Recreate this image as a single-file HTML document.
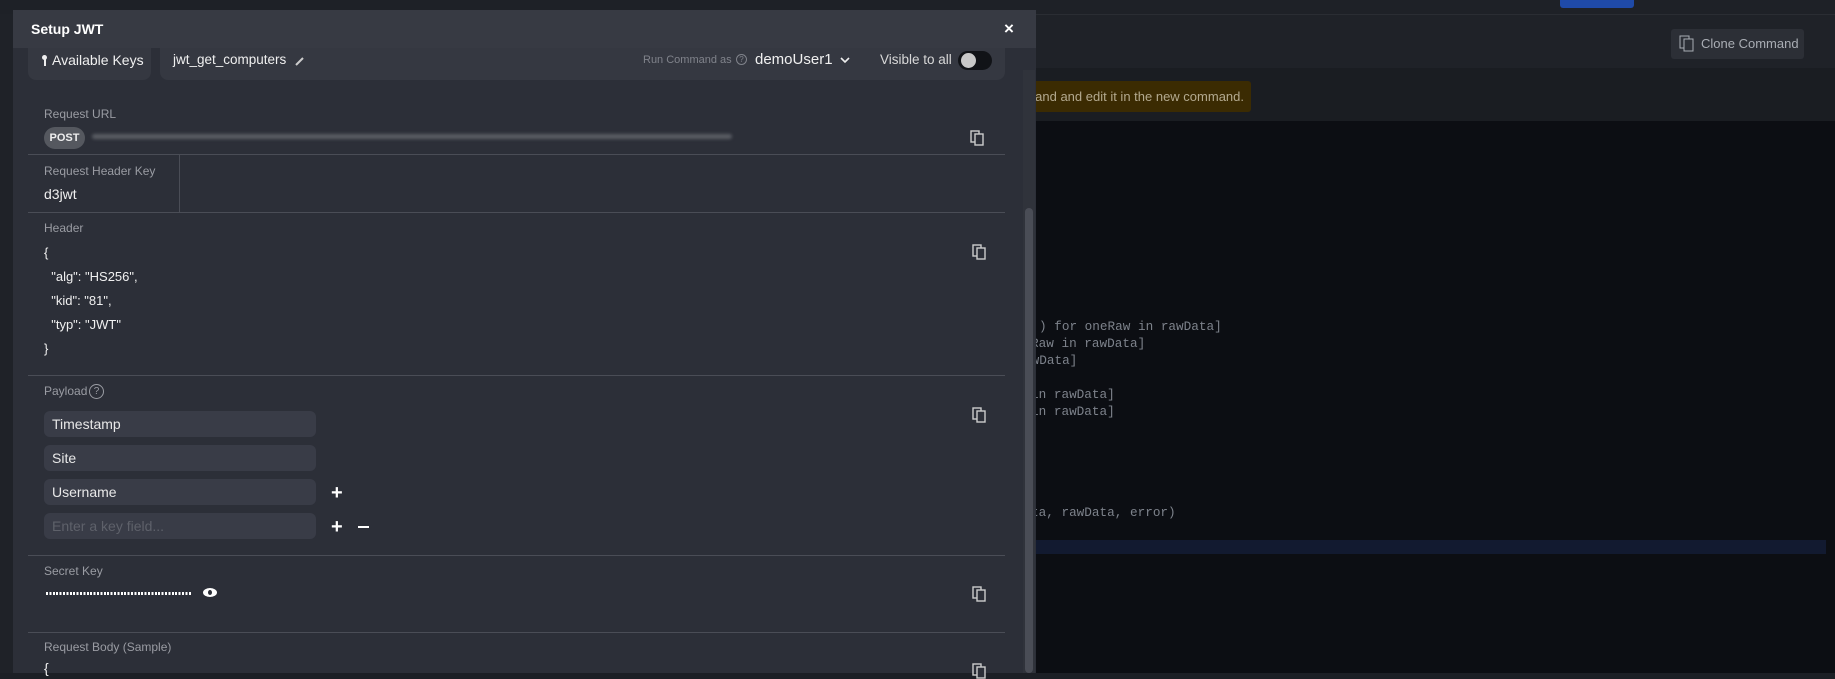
<!DOCTYPE html>
<html><head><meta charset="utf-8"><style>
*{margin:0;padding:0;box-sizing:border-box}
body{width:1835px;height:673px;overflow:hidden;background:#1c1f25;font-family:"Liberation Sans",sans-serif;position:relative}
.a{position:absolute;white-space:nowrap}
.lbl{position:absolute;left:44px;font-size:12px;color:#9a9ca3}
.val{position:absolute;left:44px;font-size:14px;color:#f0f0f0}
.hr{position:absolute;left:28px;width:977px;height:1px;background:#4a4d56}
.inp{position:absolute;left:44px;width:272px;height:26px;background:#393c47;border-radius:6px;color:#e8e8e8;font-size:14px;padding:5px 8px;white-space:nowrap}
.code{position:absolute;font-family:"Liberation Mono",monospace;font-size:12.7px;color:#7d828b;white-space:pre}
.cp{position:absolute;width:14px;height:16px}
</style></head><body>
<div class="a" style="left:0;top:0;width:1835px;height:14px;background:#1e2127"></div>
<div class="a" style="left:0;top:14px;width:1835px;height:54px;background:#1f2228;border-top:1px solid #2a2d33"></div>
<div class="a" style="left:1671px;top:29px;width:133px;height:30px;background:#2c2f36;border-radius:3px;color:#a9adb4;font-size:13px;line-height:30px;padding-left:30px">Clone Command</div>
<svg class="a" style="left:1679px;top:35px" width="16" height="18" viewBox="0 0 16 18"><rect x="1" y="1" width="9" height="12" fill="none" stroke="#a9adb4"/><rect x="5" y="4" width="9" height="12" fill="#2c2f36" stroke="#a9adb4"/></svg>
<div class="a" style="left:1560px;top:0;width:74px;height:8px;background:#1f4aa8;border-radius:0 0 3px 3px"></div>
<div class="a" style="left:0;top:68px;width:1835px;height:53px;background:#1a1d22"></div>
<div class="a" style="left:1000px;top:81px;width:251px;height:31px;background:#3b2b02;border-radius:3px;color:#b3a98f;font-size:13px;line-height:31px;text-align:right;padding-right:7px">and and edit it in the new command.</div>
<div class="a" style="left:0;top:121px;width:1835px;height:552px;background:#0c0e13"></div>
<div class="a" style="left:1000px;top:540px;width:826px;height:14px;background:#121a30"></div>
<div class="code" style="left:1039px;top:319px">) for oneRaw in rawData]</div>
<div class="code" style="left:1031px;top:336px">Raw in rawData]</div>
<div class="code" style="left:1024px;top:353px">awData]</div>
<div class="code" style="left:1031px;top:387px">in rawData]</div>
<div class="code" style="left:1031px;top:404px">in rawData]</div>
<div class="code" style="left:1031px;top:505px">ta, rawData, error)</div>
<div class="a" style="left:0;top:14px;width:14px;height:659px;background:#1f2228"></div>

<!-- modal -->
<div class="a" style="left:13px;top:10px;width:1023px;height:663px;background:#2c2f38"></div>
<div class="a" style="left:28px;top:40px;width:123px;height:40px;background:#353841;border-radius:0 0 8px 8px"></div>
<div class="a" style="left:160px;top:40px;width:845px;height:40px;background:#353841;border-radius:0 0 8px 8px"></div>
<div class="a" style="left:13px;top:10px;width:1023px;height:38px;background:#373a43"></div>
<div class="a" style="left:31px;top:21px;font-size:14px;font-weight:bold;color:#fff">Setup JWT</div>
<div class="a" style="left:1004px;top:19px;font-size:17px;font-weight:bold;color:#fff">×</div>
<div class="a" style="left:42px;top:55px;width:5px;height:5px;border-radius:50%;background:#eee"></div>
<div class="a" style="left:44px;top:59px;width:1.5px;height:7px;background:#eee"></div>
<div class="a" style="left:52px;top:52px;font-size:14px;color:#f0f0f0">Available Keys</div>
<div class="a" style="left:173px;top:52px;font-size:13.5px;color:#f0f0f0">jwt_get_computers</div>
<svg class="a" style="left:294px;top:55px" width="12" height="12" viewBox="0 0 12 12"><path d="M2 10L9 3" stroke="#ccc" stroke-width="2"/></svg>
<div class="a" style="left:643px;top:54px;font-size:11px;color:#80838b">Run Command as</div>
<div class="a" style="left:736px;top:54px;width:11px;height:11px;border:1px solid #80838b;border-radius:50%;font-size:8px;color:#80838b;text-align:center;line-height:9px">?</div>
<div class="a" style="left:755px;top:51px;font-size:15px;color:#f0f0f0">demoUser1</div>
<svg class="a" style="left:840px;top:56px" width="10" height="8" viewBox="0 0 10 8"><path d="M1 2l4 4 4-4" stroke="#eee" stroke-width="1.6" fill="none"/></svg>
<div class="a" style="left:880px;top:52px;font-size:13.5px;color:#d8d8d8">Visible to all</div>
<div class="a" style="left:958px;top:51px;width:34px;height:19px;border-radius:10px;background:#111317"></div>
<div class="a" style="left:961px;top:53px;width:15px;height:15px;border-radius:50%;background:#c8c8c8"></div>

<div class="a" style="left:1023px;top:70px;width:12px;height:603px;background:#30333b"></div>
<div class="a" style="left:1025px;top:208px;width:8px;height:465px;background:#4a4d56;border-radius:4px"></div>

<div class="lbl" style="top:107px">Request URL</div>
<div class="a" style="left:44px;top:127px;width:41px;height:22px;border-radius:11px;background:#55585f;color:#eee;font-size:11px;font-weight:bold;text-align:center;line-height:22px">POST</div>
<div class="a" style="left:92px;top:134px;width:640px;height:5px;background:#5a5d64;border-radius:3px;filter:blur(1.5px)"></div>
<svg class="cp" style="left:970px;top:130px" viewBox="0 0 14 16"><rect x="1" y="1" width="8" height="11" fill="none" stroke="#ccc" stroke-width="1.4"/><rect x="5" y="4" width="8" height="11" fill="#2c2f38" stroke="#ccc" stroke-width="1.4"/></svg>
<div class="hr" style="top:154px"></div>
<div class="lbl" style="top:164px">Request Header Key</div>
<div class="val" style="top:186px">d3jwt</div>
<div class="a" style="left:179px;top:155px;width:1px;height:57px;background:#4a4d56"></div>
<div class="hr" style="top:212px"></div>
<div class="lbl" style="top:221px">Header</div>
<div class="val" style="top:241px;line-height:24px;white-space:pre;font-size:13px">{
  "alg": "HS256",
  "kid": "81",
  "typ": "JWT"
}</div>
<svg class="cp" style="left:972px;top:244px" viewBox="0 0 14 16"><rect x="1" y="1" width="8" height="11" fill="none" stroke="#ccc" stroke-width="1.4"/><rect x="5" y="4" width="8" height="11" fill="#2c2f38" stroke="#ccc" stroke-width="1.4"/></svg>
<div class="hr" style="top:375px"></div>
<div class="lbl" style="top:384px">Payload</div>
<div class="a" style="left:89px;top:384px;width:15px;height:15px;border:1.3px solid #9a9ca3;border-radius:50%;font-size:10px;color:#9a9ca3;text-align:center;line-height:13px">?</div>
<svg class="cp" style="left:972px;top:407px" viewBox="0 0 14 16"><rect x="1" y="1" width="8" height="11" fill="none" stroke="#ccc" stroke-width="1.4"/><rect x="5" y="4" width="8" height="11" fill="#2c2f38" stroke="#ccc" stroke-width="1.4"/></svg>
<div class="inp" style="top:411px">Timestamp</div>
<div class="inp" style="top:445px">Site</div>
<div class="inp" style="top:479px">Username</div>
<div class="inp" style="top:513px;color:#5e616a">Enter a key field...</div>
<div class="a" style="left:331px;top:486px;font-size:20px;color:#fff;font-weight:bold;line-height:14px">+</div>
<div class="a" style="left:331px;top:520px;font-size:20px;color:#fff;font-weight:bold;line-height:14px">+</div>
<div class="a" style="left:358px;top:526px;width:11px;height:2px;background:#fff"></div>
<div class="hr" style="top:555px"></div>
<div class="lbl" style="top:564px">Secret Key</div>
<div class="a" style="left:46px;top:592px;width:145px;height:3px;background:repeating-linear-gradient(90deg,#fff 0 2px,transparent 2px 3.4px)"></div>
<div class="a" style="left:203px;top:588px;width:14px;height:9px;border-radius:50%;background:#fff"></div>
<div class="a" style="left:208px;top:590px;width:4px;height:5px;border-radius:50%;background:#2c2f38"></div>
<svg class="cp" style="left:972px;top:586px" viewBox="0 0 14 16"><rect x="1" y="1" width="8" height="11" fill="none" stroke="#ccc" stroke-width="1.4"/><rect x="5" y="4" width="8" height="11" fill="#2c2f38" stroke="#ccc" stroke-width="1.4"/></svg>
<div class="hr" style="top:632px"></div>
<div class="lbl" style="top:640px">Request Body (Sample)</div>
<div class="val" style="top:660px">{</div>
<svg class="cp" style="left:972px;top:663px" viewBox="0 0 14 16"><rect x="1" y="1" width="8" height="11" fill="none" stroke="#ccc" stroke-width="1.4"/><rect x="5" y="4" width="8" height="11" fill="#2c2f38" stroke="#ccc" stroke-width="1.4"/></svg>
</body></html>
